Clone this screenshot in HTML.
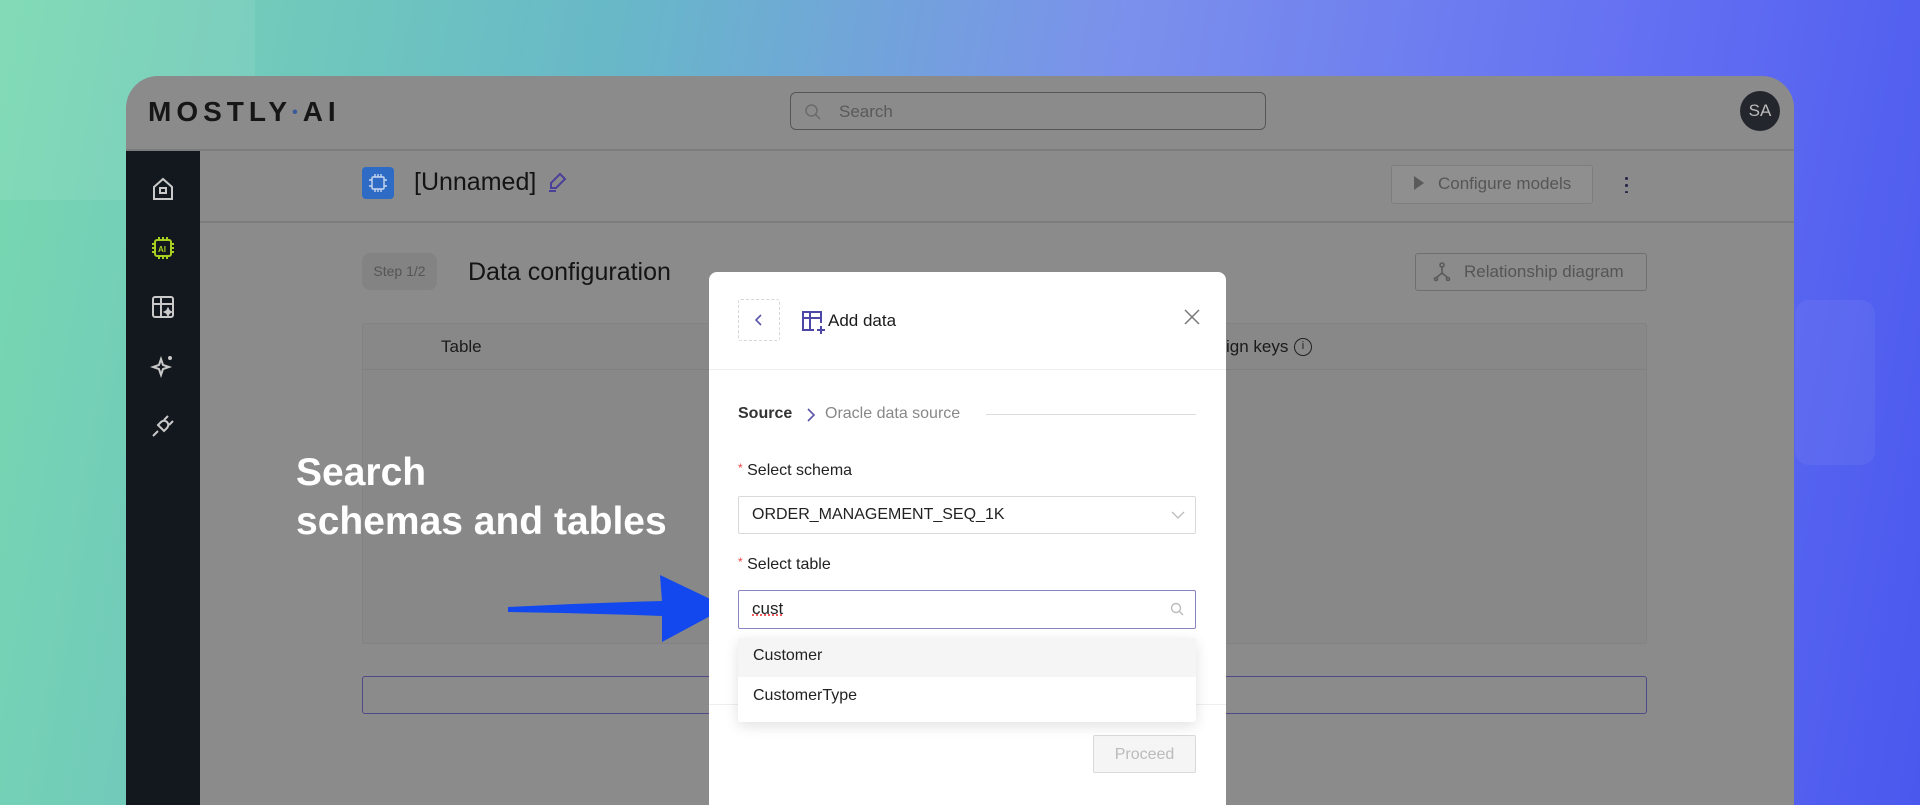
<!DOCTYPE html>
<html><head><meta charset="utf-8"><style>
*{box-sizing:border-box;margin:0;padding:0}
html,body{width:1920px;height:805px;overflow:hidden}
body{position:relative;font-family:"Liberation Sans",sans-serif;background:linear-gradient(100deg,#78d8b0 0%,#68b8c8 30%,#7b90ec 55%,#6470f2 80%,#4a58ee 100%)}
.abs{position:absolute}
.win{left:126px;top:76px;width:1668px;height:729px;background:#8b8b8b;border-radius:32px 32px 0 0;overflow:hidden}
.t{color:#141414}
</style></head><body>
<div class="abs" style="left:0;top:0;width:255px;height:200px;background:rgba(255,255,255,0.08)"></div>
<div class="abs" style="left:1795px;top:300px;width:80px;height:165px;background:rgba(255,255,255,0.05);border-radius:14px"></div>

<div class="abs win">
  <div class="abs t" style="left:22px;top:20px;font-size:28px;font-weight:bold;letter-spacing:5px;color:#161616">MOSTLY<span style="color:#3a5a9a;font-size:16px;vertical-align:4px">•</span>AI</div>
  <div class="abs" style="left:664px;top:16px;width:476px;height:38px;border:1.5px solid #555;border-radius:6px">
    <svg class="abs" style="left:13px;top:10px" width="18" height="18" viewBox="0 0 18 18" fill="none" stroke="#6a6a6a" stroke-width="1.5"><circle cx="7.5" cy="7.5" r="5.5"/><path d="M11.5 11.5L16 16"/></svg>
    <div class="abs" style="left:48px;top:9px;font-size:17px;color:#5a5a5a">Search</div>
  </div>
  <div class="abs" style="left:1614px;top:15px;width:40px;height:40px;border-radius:50%;background:#23272d;color:#bbb;font-size:17px;text-align:center;line-height:40px">SA</div>
  <div class="abs" style="left:0;top:73px;width:1668px;height:2px;background:#7c7c7c"></div>
  <div class="abs" style="left:0;top:75px;width:74px;height:700px;background:#13181e">
    <svg class="abs" style="left:24px;top:25px" width="26" height="26" viewBox="0 0 26 26" fill="none" stroke="#c9c9c9" stroke-width="2"><path d="M4 11L13 3l9 8v12H4z"/><rect x="10" y="12" width="6" height="5"/></svg>
    <svg class="abs" style="left:24px;top:84px" width="26" height="26" viewBox="0 0 26 26" fill="none" stroke="#a8d020" stroke-width="2"><rect x="5" y="5" width="16" height="16" rx="2"/><path d="M9 2v3M13 2v3M17 2v3M9 21v3M13 21v3M17 21v3M2 9h3M2 13h3M2 17h3M21 9h3M21 13h3M21 17h3"/><text x="8" y="17" font-size="8" fill="#a8d020" stroke="none" font-family="Liberation Sans" font-weight="bold">AI</text></svg>
    <svg class="abs" style="left:24px;top:143px" width="26" height="26" viewBox="0 0 26 26" fill="none" stroke="#c9c9c9" stroke-width="2"><rect x="3" y="3" width="20" height="20" rx="2"/><path d="M3 10h20M11 3v20"/><path d="M18 15l1 2 2 1-2 1-1 2-1-2-2-1 2-1z" fill="#c9c9c9"/></svg>
    <svg class="abs" style="left:24px;top:202px" width="26" height="26" viewBox="0 0 26 26" fill="none" stroke="#c9c9c9" stroke-width="2"><path d="M11 6l2 6 6 2-6 2-2 6-2-6-6-2 6-2z"/><circle cx="20" cy="5" r="1" fill="#c9c9c9"/></svg>
    <svg class="abs" style="left:24px;top:262px" width="26" height="26" viewBox="0 0 26 26" fill="none" stroke="#c9c9c9" stroke-width="2"><path d="M3 23l5-5M8 12l6 6 3-3a4 4 0 00-6-6zM14 7l4-4M19 12l4-4"/></svg>
  </div>
  <div class="abs" style="left:236px;top:91px;width:32px;height:32px;background:#2e6bc4;border-radius:4px"></div>
  <svg class="abs" style="left:242px;top:97px" width="20" height="20" viewBox="0 0 20 20" fill="none" stroke="#c8d8f0" stroke-width="1.4"><rect x="4" y="4" width="12" height="12" rx="1"/><path d="M7 1v3M10 1v3M13 1v3M7 16v3M10 16v3M13 16v3M1 7h3M1 13h3M16 7h3M16 13h3"/></svg>
  <div class="abs t" style="left:288px;top:92px;font-size:25px">[Unnamed]</div>
  <svg class="abs" style="left:420px;top:95px" width="22" height="22" viewBox="0 0 22 22" fill="none" stroke="#4a3f9a" stroke-width="2"><path d="M14 3l5 5-9 9H5v-5z"/><path d="M3 20h7"/></svg>
  <div class="abs" style="left:1265px;top:89px;width:202px;height:39px;border:1.5px solid #7e7e7e;border-radius:3px;background:#8f8f8f"></div>
  <div class="abs" style="left:1288px;top:100px;width:0;height:0;border-left:10px solid #5a5a5a;border-top:7px solid transparent;border-bottom:7px solid transparent"></div>
  <div class="abs" style="left:1312px;top:98px;font-size:17px;color:#565656">Configure models</div>
  <div class="abs" style="left:1499px;top:99px;width:3px;height:18px;background:radial-gradient(circle,#2a2a4a 1.5px,transparent 1.6px) 0 0/3px 7px"></div>
  <div class="abs" style="left:74px;top:145px;width:1600px;height:2px;background:#7c7c7c"></div>
  <div class="abs" style="left:236px;top:177px;width:75px;height:37px;background:#838383;border-radius:8px;font-size:14px;color:#555;text-align:center;line-height:37px">Step 1/2</div>
  <div class="abs t" style="left:342px;top:182px;font-size:25px">Data configuration</div>
  <div class="abs" style="left:1289px;top:177px;width:232px;height:38px;border:1.5px solid #6f6f6f;border-radius:3px"></div>
  <svg class="abs" style="left:1306px;top:186px" width="20" height="20" viewBox="0 0 20 20" fill="none" stroke="#5a5a5a" stroke-width="1.6"><circle cx="10" cy="3" r="2"/><path d="M10 5v6L4 16M10 11l6 5"/><circle cx="4" cy="17" r="1.5"/><circle cx="16" cy="17" r="1.5"/></svg>
  <div class="abs" style="left:1338px;top:186px;font-size:17px;color:#555">Relationship diagram</div>
  <div class="abs" style="left:236px;top:247px;width:1285px;height:321px;background:#888;border:1px solid #828282;border-radius:3px"></div>
  <div class="abs" style="left:236px;top:293px;width:1285px;height:1px;background:#808080"></div>
  <div class="abs t" style="left:315px;top:261px;font-size:17px;color:#1a1a1a">Table</div>
  <div class="abs t" style="left:1100px;top:261px;font-size:17px;color:#1a1a1a">ign keys</div>
  <div class="abs" style="left:1168px;top:262px;width:18px;height:18px;border:1.5px solid #222;border-radius:50%;font-size:11px;text-align:center;line-height:15px;color:#222">i</div>
  <div class="abs" style="left:236px;top:600px;width:1285px;height:38px;border:1.5px solid #4e4a86;border-radius:3px"></div>
</div>

<div class="abs" style="left:296px;top:448px;font-size:39px;font-weight:bold;color:#fff;line-height:49px">Search<br>schemas and tables</div>
<svg class="abs" style="left:505px;top:570px" width="240" height="75" viewBox="0 0 240 75"><path d="M3 37 Q80 33 157 31 L155 5 L222 37 L157 72 L157 46 Q80 43 3 42 Z" fill="#1248ee"/></svg>

<div class="abs" style="left:709px;top:272px;width:517px;height:533px;background:#fff;border-radius:8px 8px 0 0">
  <div class="abs" style="left:29px;top:27px;width:42px;height:42px;border:1.5px dashed #d6d6d6;border-radius:3px"></div>
  <svg class="abs" style="left:44px;top:40px" width="12" height="16" viewBox="0 0 12 16" fill="none" stroke="#5a55a8" stroke-width="1.6"><path d="M8 3L3 8l5 5"/></svg>
  <svg class="abs" style="left:91px;top:37px" width="26" height="26" viewBox="0 0 26 26" fill="none" stroke="#4d48a8" stroke-width="2"><path d="M14 21H3V3h18v11M3 9h18M10 3v18"/><path d="M21 17v8M17 21h8"/></svg>
  <div class="abs" style="left:119px;top:39px;font-size:17px;color:#1a1a1a">Add data</div>
  <svg class="abs" style="left:474px;top:36px" width="18" height="18" viewBox="0 0 18 18" stroke="#777" stroke-width="1.5"><path d="M2 2l14 14M16 2L2 16"/></svg>
  <div class="abs" style="left:0;top:97px;width:517px;height:1px;background:#eee"></div>
  <div class="abs" style="left:29px;top:133px;font-size:16px;font-weight:bold;color:#333">Source</div>
  <svg class="abs" style="left:97px;top:135px" width="10" height="16" viewBox="0 0 10 16" fill="none" stroke="#5a55a8" stroke-width="1.6"><path d="M2 2l6 6-6 6"/></svg>
  <div class="abs" style="left:116px;top:133px;font-size:16px;color:#888">Oracle data source</div>
  <div class="abs" style="left:277px;top:142px;width:210px;height:1px;background:#ddd"></div>
  <div class="abs" style="left:29px;top:189px;font-size:16px;color:#222"><span style="color:#e44;font-size:12px;vertical-align:3px">*</span> Select schema</div>
  <div class="abs" style="left:29px;top:224px;width:458px;height:38px;border:1px solid #d9d9d9;border-radius:2px"></div>
  <div class="abs" style="left:43px;top:234px;font-size:16px;color:#222">ORDER_MANAGEMENT_SEQ_1K</div>
  <svg class="abs" style="left:462px;top:238px" width="14" height="10" viewBox="0 0 14 10" fill="none" stroke="#bbb" stroke-width="1.3"><path d="M1 2l6 6 6-6"/></svg>
  <div class="abs" style="left:29px;top:283px;font-size:16px;color:#222"><span style="color:#e44;font-size:12px;vertical-align:3px">*</span> Select table</div>
  <div class="abs" style="left:29px;top:318px;width:458px;height:39px;border:1.5px solid #8984c4;border-radius:2px"></div>
  <div class="abs" style="left:43px;top:327px;font-size:17px;color:#222;text-decoration:underline dotted #e44">cust</div>
  <svg class="abs" style="left:460px;top:329px" width="16" height="16" viewBox="0 0 16 16" fill="none" stroke="#bbb" stroke-width="1.4"><circle cx="7" cy="7" r="4.5"/><path d="M10.5 10.5L14 14"/></svg>
  <div class="abs" style="left:0;top:432px;width:517px;height:1px;background:#eee"></div>
  <div class="abs" style="left:384px;top:463px;width:103px;height:38px;border:1px solid #d9d9d9;border-radius:2px;background:#f5f5f5;font-size:16px;color:#bbb;text-align:center;line-height:37px">Proceed</div>
  <div class="abs" style="left:29px;top:366px;width:458px;height:84px;background:#fff;box-shadow:0 4px 14px rgba(0,0,0,0.12);border-radius:3px">
    <div style="height:39px;background:#f5f5f5;padding:9px 15px;font-size:16px;color:#222">Customer</div>
    <div style="height:40px;padding:10px 15px;font-size:16px;color:#222">CustomerType</div>
  </div>
</div>
</body></html>
